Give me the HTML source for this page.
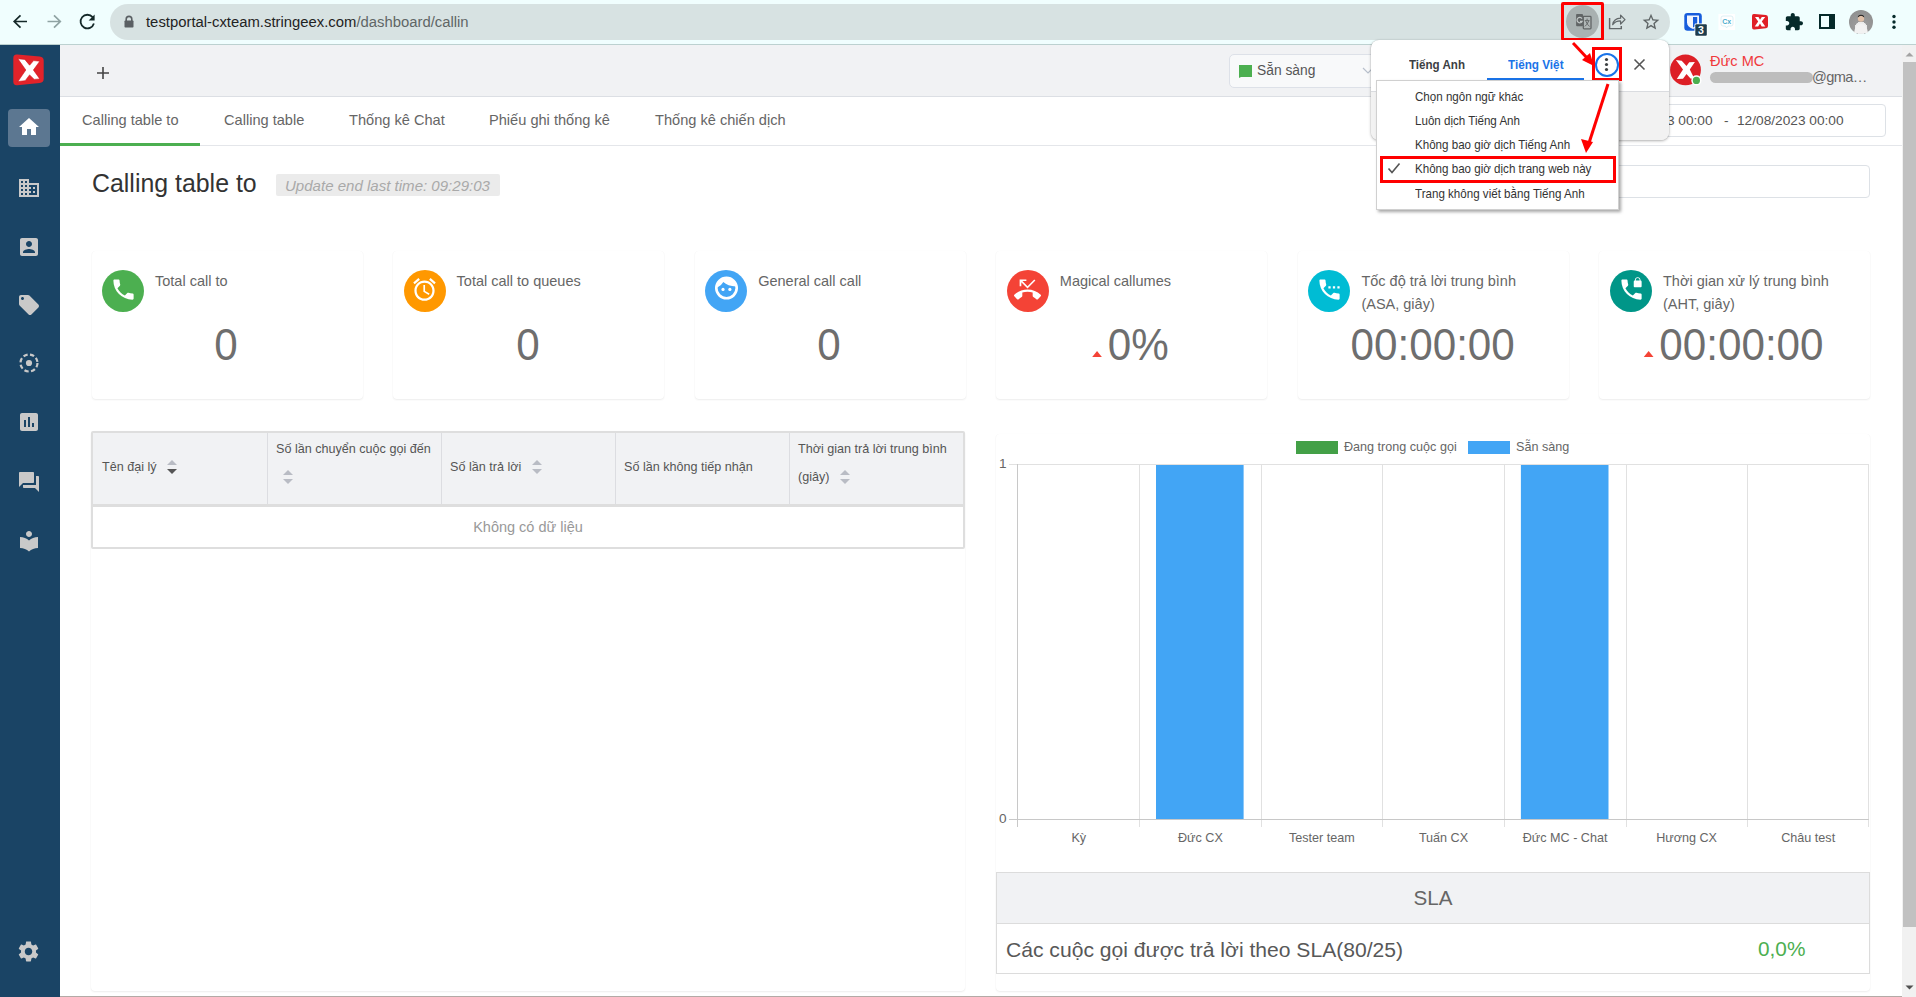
<!DOCTYPE html>
<html><head><meta charset="utf-8">
<style>
*{margin:0;padding:0;box-sizing:border-box}
html,body{width:1916px;height:997px;overflow:hidden;background:#fff;font-family:"Liberation Sans",sans-serif;position:relative}
.a{position:absolute}
.t{position:absolute;white-space:nowrap;line-height:1}
</style></head><body>

<!-- ===== BROWSER BAR ===== -->
<div class="a" style="left:0;top:0;width:1916px;height:44px;background:#f0fefe"></div>
<div class="a" style="left:0;top:44px;width:1916px;height:1px;background:#bcd1d0"></div>
<!-- back -->
<svg class="a" style="left:0;top:0" width="110" height="44">
<path d="M27 21.5 H14.5 M20.5 15.3 L14.2 21.5 L20.5 27.7" fill="none" stroke="#142828" stroke-width="1.7"/>
<path d="M47.5 21.5 H60 M54 15.3 L60.3 21.5 L54 27.7" fill="none" stroke="#8fa3a3" stroke-width="1.7"/>
<path d="M92.6 17.2 A6.8 6.8 0 1 0 93.9 23.5" fill="none" stroke="#142828" stroke-width="1.8"/>
<path d="M94.6 14.6 V20.6 H88.6 Z" fill="#142828"/>
</svg>
<div class="a" style="left:110px;top:4px;width:1560px;height:36px;border-radius:18px;background:#d7e2e2"></div>
<!-- lock -->
<svg class="a" style="left:123px;top:15px" width="12" height="13" viewBox="0 0 12 13"><path d="M3.2 6V4.2a2.8 2.8 0 0 1 5.6 0V6" fill="none" stroke="#5a5f63" stroke-width="1.6"/><rect x="1.5" y="5.5" width="9" height="7" rx="0.8" fill="#5a5f63"/></svg>
<div class="t" style="left:146px;top:15px;font-size:14.85px;color:#1f2323">testportal-cxteam.stringeex.com<span style="color:#5f6666">/dashboard/callin</span></div>


<!-- toolbar right -->
<div class="a" style="left:1566px;top:5px;width:33px;height:33px;border-radius:50%;background:#a9b1b1"></div>
<svg class="a" style="left:1566px;top:6px" width="34" height="32" viewBox="1566 6 34 32"><path d="M1583.3 16.4 H1590.2 Q1591 16.4 1591 17.2 V28 Q1591 28.8 1590.2 28.8 H1584.1 Q1583.3 28.8 1583.3 28 Z" fill="#b0b7b7" stroke="#616566" stroke-width="1.3"/><rect x="1576.1" y="13.9" width="6.9" height="12.3" rx="0.9" fill="#616566"/><path d="M1582 18.6 A2.7 2.7 0 1 0 1582.2 21.3 H1580" fill="none" stroke="#c2c8c8" stroke-width="1.2"/><path d="M1587.1 18.6 V20 M1584.8 20.6 H1589.5 M1588.6 21 Q1587.5 24.5 1584.9 26.4 M1585.9 21.2 Q1587 24.6 1589.6 26.4" fill="none" stroke="#616566" stroke-width="0.95"/></svg>
<div class="a" style="left:1561px;top:2px;width:43px;height:39px;border:3px solid #ff0000;border-radius:2px"></div>
<svg class="a" style="left:1604px;top:8px" width="30" height="28" viewBox="1604 8 30 28"><path d="M1609.6 18 V28.6 H1621.3 V26" fill="none" stroke="#62686a" stroke-width="1.45"/><path d="M1612.7 24.7 Q1613.6 18.6 1620.6 18.2 V15.1 L1625 19.6 L1620.6 24 V21 Q1615.6 20.9 1612.7 24.7 Z" fill="none" stroke="#62686a" stroke-width="1.25" stroke-linejoin="round"/></svg>
<svg class="a" style="left:1640.5px;top:11.6px" width="20" height="20" viewBox="0 0 24 24"><path d="M22 9.24l-7.19-.62L12 2 9.19 8.63 2 9.24l5.46 4.73L5.82 21 12 17.27 18.18 21l-1.63-7.03L22 9.24zM12 15.4l-3.76 2.27 1-4.28-3.32-2.88 4.38-.38L12 6.1l1.71 4.04 4.38.38-3.32 2.88 1 4.28L12 15.4z" fill="#5f6566"/></svg>
<!-- bitwarden -->
<svg class="a" style="left:1683px;top:12px" width="26" height="26" viewBox="0 0 26 26"><rect x="1.3" y="1" width="17.5" height="17.8" rx="3.2" fill="#175ddc"/><path d="M4 3.6 H16 V10.5 Q16 14.5 10 17 Q4 14.5 4 10.5 Z" fill="#f3f6fd"/><path d="M10 5 H14.2 V10.5 Q14.2 13.5 10 15.6 Z" fill="#175ddc"/><rect x="11.5" y="11.5" width="13" height="13" rx="1.2" fill="#fff"/><rect x="12.3" y="12.3" width="11.5" height="11.5" rx="1" fill="#1e3d4d"/><text x="15" y="22.3" font-family="Liberation Sans" font-weight="bold" font-size="10.5" fill="#fff">3</text></svg>
<svg class="a" style="left:1718px;top:13px" width="18" height="18" viewBox="0 0 18 18"><rect x="0.5" y="1" width="16.5" height="16" fill="#fff"/><path d="M3 5 Q3 3 5 3 H13 Q15 3 15 5 V11 Q15 13 13 13 H10 L8.5 15 L7.5 13 H5 Q3 13 3 11Z" fill="none" stroke="#d4ecf3" stroke-width="0.8"/><text x="4.2" y="10.6" font-family="Liberation Sans" font-weight="bold" font-size="7" fill="#4aaccc">Cx</text></svg>
<svg class="a" style="left:1751px;top:13px" width="18" height="17" viewBox="0 0 18 17"><path d="M1 3 Q1 0.5 3.5 1 L15 2 Q17 2.3 17 4.5 L17 13 Q17 15 15 15.3 L3.5 16.5 Q1 17 1 14 Z" fill="#e01f26"/><path d="M4 4 L7.5 4 L9 6.8 L10.8 4 L14.2 4 L10.8 8.5 L14.3 13.5 L10.7 13.5 L9 10.6 L7.2 13.5 L3.7 13.5 L7.2 8.5 Z" fill="#fff"/></svg>
<svg class="a" style="left:1784.5px;top:12.5px" width="18" height="18" viewBox="1 1 22 22"><path d="M20.5 11H19V7c0-1.1-.9-2-2-2h-4V3.5C13 2.12 11.88 1 10.5 1S8 2.12 8 3.5V5H4c-1.1 0-1.99.9-1.99 2v3.8H3.5c1.49 0 2.7 1.21 2.7 2.7s-1.21 2.7-2.7 2.7H2V20c0 1.1.9 2 2 2h3.8v-1.5c0-1.49 1.21-2.7 2.7-2.7 1.49 0 2.7 1.21 2.7 2.7V22H17c1.1 0 2-.9 2-2v-4h1.5c1.38 0 2.5-1.12 2.5-2.5S21.88 11 20.5 11z" fill="#062a2a" transform="rotate(0)"/></svg>
<svg class="a" style="left:1819px;top:14px" width="16" height="15" viewBox="0 0 16 15"><rect x="1" y="1" width="14" height="13" fill="none" stroke="#062a2a" stroke-width="2"/><rect x="10" y="1" width="5" height="13" fill="#062a2a"/></svg>
<div class="a" style="left:1849px;top:10px;width:24px;height:24px;border-radius:50%;background:radial-gradient(circle at 50% 75%,#f4f4f4 0,#eaeaea 28%,#9a9a9a 30%,#8c8c8c 100%)"></div>
<svg class="a" style="left:1854px;top:13px" width="14" height="20" viewBox="0 0 14 20"><circle cx="7" cy="5.5" r="3.2" fill="#e0c0a8"/><path d="M3.8 4.5 Q7 1 10.2 4.5 L10 3 Q7 0.5 4 3Z" fill="#222"/><path d="M0 20 Q1 11 7 11 Q13 11 14 20Z" fill="#f2f2f2"/></svg>
<svg class="a" style="left:1889px;top:12px" width="10" height="20" viewBox="0 0 10 20"><circle cx="5" cy="4.5" r="1.7" fill="#062a2a"/><circle cx="5" cy="10" r="1.7" fill="#062a2a"/><circle cx="5" cy="15.3" r="1.7" fill="#062a2a"/></svg>
<!-- ===== SIDEBAR ===== -->
<div class="a" style="left:0;top:45px;width:60px;height:952px;background:#1a4465"></div>

<!-- logo -->
<svg class="a" style="left:8px;top:48px" width="42" height="44" viewBox="8 48 42 44"><path d="M17.3 54.5 L39.7 56.5 Q43.7 56.9 43.7 60.8 L43.7 78.8 Q43.7 82.6 39.7 83.1 L17.3 85.2 Q13.3 85.6 13.3 81.5 L13.3 58.2 Q13.3 54.1 17.3 54.5 Z" fill="#e2232a"/><path d="M17.9 58.8 L24.8 59.4 L29.6 65.2 L33.6 60.6 L39.8 61.2 L33.4 70 L39.8 78.9 L34.2 79.4 L29.6 74.9 L25.2 80.7 L17.9 81.5 L25.8 70 Z" fill="#fff" stroke="#d01018" stroke-width="0.6"/></svg>
<div class="a" style="left:8px;top:109px;width:42px;height:38px;border-radius:4px;background:#5c7791"></div>
<svg class="a" style="left:16.6px;top:115.4px" width="24" height="24" viewBox="0 0 24 24"><path d="M10 20v-6h4v6h5v-8h3L12 3 2 12h3v8z" fill="#fff"/></svg>
<svg class="a" style="left:16.6px;top:175.7px" width="24" height="24" viewBox="0 0 24 24"><path d="M12 7V3H2v18h20V7H12zM6 19H4v-2h2v2zm0-4H4v-2h2v2zm0-4H4V9h2v2zm0-4H4V5h2v2zm4 12H8v-2h2v2zm0-4H8v-2h2v2zm0-4H8V9h2v2zm0-4H8V5h2v2zm10 12h-8v-2h2v-2h-2v-2h2v-2h-2V9h8v10zm-2-8h-2v2h2v-2zm0 4h-2v2h2v-2z" fill="#c9c9c9"/></svg>
<svg class="a" style="left:16.6px;top:234.5px" width="24" height="24" viewBox="0 0 24 24"><path d="M3 5v14c0 1.1.89 2 2 2h14c1.1 0 2-.9 2-2V5c0-1.1-.9-2-2-2H5c-1.11 0-2 .9-2 2zm12 4c0 1.66-1.34 3-3 3s-3-1.34-3-3 1.34-3 3-3 3 1.34 3 3zm-9 8c0-2 4-3.1 6-3.1s6 1.1 6 3.1v1H6v-1z" fill="#c9c9c9"/></svg>
<svg class="a" style="left:16.6px;top:293.3px" width="24" height="24" viewBox="0 0 24 24"><path d="M21.41 11.58l-9-9C12.05 2.22 11.55 2 11 2H4c-1.1 0-2 .9-2 2v7c0 .55.22 1.05.59 1.42l9 9c.36.36.86.58 1.41.58.55 0 1.05-.22 1.41-.59l7-7c.37-.36.59-.86.59-1.41 0-.55-.23-1.06-.59-1.42zM5.5 7C4.67 7 4 6.33 4 5.5S4.67 4 5.5 4 7 4.67 7 5.5 6.33 7 5.5 7z" fill="#c9c9c9"/></svg>
<svg class="a" style="left:16.6px;top:351.2px" width="24" height="24" viewBox="0 0 24 24"><circle cx="12" cy="12" r="8.5" fill="none" stroke="#c9c9c9" stroke-width="2.2" stroke-dasharray="4.4 2.4"/><circle cx="12" cy="12" r="3.1" fill="#c9c9c9"/></svg>
<svg class="a" style="left:16.6px;top:410.0px" width="24" height="24" viewBox="0 0 24 24"><path d="M19 3H5c-1.1 0-2 .9-2 2v14c0 1.1.9 2 2 2h14c1.1 0 2-.9 2-2V5c0-1.1-.9-2-2-2zM9 17H7v-7h2v7zm4 0h-2V7h2v10zm4 0h-2v-4h2v4z" fill="#c9c9c9"/></svg>
<svg class="a" style="left:16.6px;top:470.2px" width="24" height="24" viewBox="0 0 24 24"><path d="M21 6h-2v9H6v2c0 .55.45 1 1 1h11l4 4V7c0-.55-.45-1-1-1zm-4 6V3c0-.55-.45-1-1-1H3c-.55 0-1 .45-1 1v14l4-4h10c.55 0 1-.45 1-1z" fill="#c9c9c9"/></svg>
<svg class="a" style="left:16.6px;top:528.6px" width="24" height="24" viewBox="0 0 24 24"><path d="M12 11.55C9.64 9.35 6.48 8 3 8v11c3.48 0 6.64 1.35 9 3.55 2.36-2.19 5.52-3.55 9-3.55V8c-3.48 0-6.64 1.35-9 3.55zM12 8c1.66 0 3-1.34 3-3s-1.34-3-3-3-3 1.34-3 3 1.34 3 3 3z" fill="#c9c9c9"/></svg>
<svg class="a" style="left:16px;top:939px" width="25" height="25" viewBox="0 0 24 24"><path d="M19.14 12.94c.04-.3.06-.61.06-.94 0-.32-.02-.64-.07-.94l2.03-1.58c.18-.14.23-.41.12-.61l-1.92-3.32c-.12-.22-.37-.29-.59-.22l-2.39.96c-.5-.38-1.03-.7-1.620-.94l-.36-2.54c-.04-.24-.24-.41-.48-.41h-3.84c-.24 0-.43.17-.47.41l-.36 2.54c-.59.24-1.13.57-1.62.94l-2.39-.96c-.22-.08-.47 0-.59.22L2.740 8.87c-.12.21-.08.47.12.61l2.03 1.58c-.05.3-.09.63-.09.94s.02.64.07.94l-2.03 1.58c-.18.14-.23.41-.12.61l1.92 3.32c.12.22.37.29.59.22l2.39-.96c.5.38 1.03.7 1.62.94l.36 2.54c.05.24.24.41.48.41h3.84c.24 0 .44-.17.47-.41l.36-2.54c.59-.24 1.13-.56 1.62-.94l2.39.96c.22.08.47 0 .59-.22l1.92-3.32c.12-.22.07-.47-.12-.61l-2.010-1.58zM12 15.6c-1.98 0-3.6-1.62-3.6-3.6s1.62-3.6 3.6-3.6 3.6 1.62 3.6 3.6-1.62 3.6-3.6 3.6z" fill="#c9c9c9"/></svg>

<!-- ===== HEADER ===== -->
<div class="a" style="left:60px;top:45px;width:1842px;height:51px;background:#f1f2f4"></div>
<div class="a" style="left:60px;top:96px;width:1842px;height:1px;background:#dcdfe4"></div>
<svg class="a" style="left:96px;top:66px" width="14" height="14" viewBox="0 0 14 14"><path d="M7 1 V13 M1 7 H13" stroke="#444" stroke-width="1.6"/></svg>


<!-- status dropdown -->
<div class="a" style="left:1229px;top:54px;width:160px;height:34px;border:1px solid #dde1e8;border-radius:5px;background:#f8f9fa"></div>
<svg class="a" style="left:1239px;top:65px" width="14" height="13" viewBox="0 0 14 13"><path d="M0 0H13V12H2L0 13Z" fill="#4caf50"/></svg>
<div class="t" style="left:1257px;top:64px;font-size:13.8px;color:#555">Sẵn sàng</div>
<svg class="a" style="left:1362px;top:67px" width="12" height="8" viewBox="0 0 12 8"><path d="M1 1 L6 6 L11 1" fill="none" stroke="#b8c0cc" stroke-width="1.2"/></svg>
<!-- avatar -->
<svg class="a" style="left:1664px;top:48px" width="46" height="44" viewBox="1664 48 46 44"><circle cx="1685.5" cy="69.9" r="15.4" fill="#dd1f26"/><path d="M1675.9 60.1 L1681.7 60.8 L1686.5 65.9 L1689.2 62.3 L1694.9 62.1 L1689.8 69.6 L1694.5 78.9 L1690.5 78.5 L1686.5 74 L1683 78.7 L1676.8 78.9 L1683 69.6 Z" fill="#fff"/><circle cx="1696.4" cy="80.4" r="5.1" fill="#fff"/><circle cx="1696.4" cy="80.4" r="3.6" fill="#4caf50"/></svg>
<div class="t" style="left:1710px;top:54px;font-size:14.6px;color:#f0393c">Đức MC</div>
<div class="a" style="left:1710px;top:72px;width:103px;height:11px;border-radius:6px;background:#bdbdbd"></div>
<div class="t" style="left:1812px;top:70px;font-size:14.6px;color:#666;letter-spacing:-0.6px">@gma…</div>
<!-- ===== TABS ===== -->
<div class="a" style="left:60px;top:145px;width:1842px;height:1px;background:#e4e6ea"></div>
<div class="a" style="left:60px;top:143px;width:140px;height:3px;background:#4caf50"></div>

<div class="t" style="left:82px;top:113px;font-size:14.6px;color:#666">Calling table to</div>
<div class="t" style="left:224px;top:113px;font-size:14.6px;color:#666">Calling table</div>
<div class="t" style="left:349px;top:113px;font-size:14.6px;color:#666">Thống kê Chat</div>
<div class="t" style="left:489px;top:113px;font-size:14.6px;color:#666">Phiếu ghi thống kê</div>
<div class="t" style="left:655px;top:113px;font-size:14.6px;color:#666">Thống kê chiến dịch</div>
<!-- date input -->
<div class="a" style="left:1500px;top:104px;width:386px;height:33px;border:1px solid #dde1e6;border-radius:4px;background:#fff"></div>
<div class="t" style="left:1606px;top:114px;font-size:13.7px;color:#555">12/07/2023 00:00</div><div class="t" style="left:1724px;top:114px;font-size:13.7px;color:#555">-</div><div class="t" style="left:1737px;top:114px;font-size:13.7px;color:#555">12/08/2023 00:00</div>
<!-- title -->
<div class="t" style="left:92px;top:171px;font-size:24.9px;color:#333">Calling table to</div>
<div class="a" style="left:276px;top:174px;width:224px;height:22px;border-radius:2px;background:#ebebeb"></div>
<div class="t" style="left:285px;top:178px;font-size:15.05px;color:#a9a9a9;font-style:italic">Update end last time: 09:29:03</div>
<!-- search input -->
<div class="a" style="left:1500px;top:165px;width:370px;height:33px;border:1px solid #dde1e6;border-radius:4px;background:#fff"></div>

<div class="a" style="left:91.5px;top:251px;width:271px;height:148px;border-radius:4px;background:#fff;box-shadow:0 1px 2px rgba(0,0,0,0.07),0 0 1px rgba(0,0,0,0.05)"></div>
<div class="a" style="left:102.0px;top:270px;width:42px;height:42px;border-radius:50%;background:#4caf50"></div>
<svg class="a" style="left:109.5px;top:276px" width="27" height="27" viewBox="0 0 24 24"><path d="M6.62 10.79c1.44 2.83 3.76 5.14 6.59 6.59l2.2-2.2c.27-.27.67-.36 1.02-.24 1.12.37 2.33.57 3.570.57.55 0 1 .45 1 1V20c0 .55-.45 1-1 1-9.39 0-17-7.61-17-17 0-.55.45-1 1-1h3.5c.55 0 1 .45 1 1 0 1.25.2 2.45.57 3.57.11.35.03.74-.25 1.02l-2.2 2.2z" fill="#fff"/></svg>
<div class="t" style="left:155.0px;top:274px;font-size:14.5px;color:#666">Total call to</div>
<div class="t" style="left:76.2px;width:300px;text-align:center;top:324px;font-size:43.5px;color:#6e6e6e"><span style="display:inline-block;transform:scaleX(0.97);white-space:nowrap">0</span></div>
<div class="a" style="left:393.0px;top:251px;width:271px;height:148px;border-radius:4px;background:#fff;box-shadow:0 1px 2px rgba(0,0,0,0.07),0 0 1px rgba(0,0,0,0.05)"></div>
<div class="a" style="left:403.6px;top:270px;width:42px;height:42px;border-radius:50%;background:#ff9800"></div>
<svg class="a" style="left:411.1px;top:276px" width="27" height="27" viewBox="0 0 24 24"><path d="M22 5.72l-4.6-3.86-1.29 1.53 4.6 3.86L22 5.72zM7.880 3.39L6.6 1.86 2 5.71l1.29 1.53 4.59-3.85zM12.5 8H11v6l4.75 2.85.75-1.23-4-2.37V8zM12 4c-4.97 0-9 4.03-9 9s4.02 9 9 9c4.97 0 9-4.03 9-9s-4.03-9-9-9zm0 16c-3.87 0-7-3.13-7-7s3.13-7 7-7 7 3.13 7 7-3.13 7-7 7z" fill="#fff"/></svg>
<div class="t" style="left:456.6px;top:274px;font-size:14.5px;color:#666">Total call to queues</div>
<div class="t" style="left:377.8px;width:300px;text-align:center;top:324px;font-size:43.5px;color:#6e6e6e"><span style="display:inline-block;transform:scaleX(0.97);white-space:nowrap">0</span></div>
<div class="a" style="left:694.5px;top:251px;width:271px;height:148px;border-radius:4px;background:#fff;box-shadow:0 1px 2px rgba(0,0,0,0.07),0 0 1px rgba(0,0,0,0.05)"></div>
<div class="a" style="left:705.2px;top:270px;width:42px;height:42px;border-radius:50%;background:#42a5f5"></div>
<svg class="a" style="left:712.7px;top:276px" width="27" height="27" viewBox="0 0 24 24"><g transform="translate(0,-1.25)"><defs><clipPath id="fc"><circle cx="12" cy="12" r="9.2"/></clipPath></defs><circle cx="12" cy="12" r="9.07" fill="none" stroke="#fff" stroke-width="2.35"/><path clip-path="url(#fc)" d="M3.5 11.8 Q7.5 9.8 9.2 6.6 Q13 10.2 20.5 10.6 L21 2 L3 2 Z" fill="#fff"/><circle cx="8.9" cy="13.2" r="1.42" fill="#fff"/><circle cx="15" cy="13.2" r="1.42" fill="#fff"/></g></svg>
<div class="t" style="left:758.2px;top:274px;font-size:14.5px;color:#666">General call call</div>
<div class="t" style="left:679.4px;width:300px;text-align:center;top:324px;font-size:43.5px;color:#6e6e6e"><span style="display:inline-block;transform:scaleX(0.97);white-space:nowrap">0</span></div>
<div class="a" style="left:996.0px;top:251px;width:271px;height:148px;border-radius:4px;background:#fff;box-shadow:0 1px 2px rgba(0,0,0,0.07),0 0 1px rgba(0,0,0,0.05)"></div>
<div class="a" style="left:1006.8px;top:270px;width:42px;height:42px;border-radius:50%;background:#f44336"></div>
<svg class="a" style="left:1014.3px;top:276px" width="27" height="27" viewBox="0 0 24 24"><path d="M6.5 5.5L12 11l7-7-1-1-6 6-4.5-4.5H11V3H5v6h1.5V5.5zm17.21 11.17C20.66 13.78 16.54 12 12 12 7.46 12 3.34 13.780.29 16.67c-.18.18-.29.43-.29.71s.11.53.29.71l2.48 2.48c.18.18.43.29.71.29.27 0 .52-.11.7-.28.79-.74 1.69-1.36 2.66-1.85.33-.16.56-.5.56-.9v-3.1c1.45-.48 3-.73 4.6-.73 1.6 0 3.15.25 4.6.72v3.1c0 .39.23.74.56.9.98.49 1.87 1.12 2.67 1.85.18.18.43.28.7.28.28 0 .53-.11.71-.29l2.48-2.48c.18-.18.29-.43.29-.71s-.12-.52-.3-.7z" fill="#fff"/></svg>
<div class="t" style="left:1059.8px;top:274px;font-size:14.5px;color:#666">Magical callumes</div>
<div class="t" style="left:980.1px;width:300px;text-align:center;top:324px;font-size:43.5px;color:#6e6e6e"><span style="display:inline-block;transform:scaleX(0.97);white-space:nowrap"><span style="display:inline-block;width:0;height:0;border-left:5px solid transparent;border-right:5px solid transparent;border-bottom:6px solid #f44336;margin-right:6px;vertical-align:3px"></span>0%</span></div>
<div class="a" style="left:1297.5px;top:251px;width:271px;height:148px;border-radius:4px;background:#fff;box-shadow:0 1px 2px rgba(0,0,0,0.07),0 0 1px rgba(0,0,0,0.05)"></div>
<div class="a" style="left:1308.4px;top:270px;width:42px;height:42px;border-radius:50%;background:#00bcd4"></div>
<svg class="a" style="left:1315.9px;top:276px" width="27" height="27" viewBox="0 0 24 24"><path d="M13 9h-2v2h2V9zm4 0h-2v2h2V9zm3 6.5c-1.25 0-2.45-.2-3.57-.57-.35-.11-.74-.03-1.02.24l-2.2 2.2c-2.83-1.44-5.15-3.75-6.59-6.58l2.2-2.21c.28-.27.36-.66.25-1.01C8.7 6.45 8.5 5.25 8.5 4c0-.55-.45-1-1-1H4c-.55 0-1 .45-1 1 0 9.39 7.61 17 17 17 .55 0 1-.45 1-1v-3.5c0-.55-.45-1-1-1zM19 9v2h2V9h-2z" fill="#fff"/></svg>
<div class="t" style="left:1361.4px;top:274px;font-size:14.5px;color:#666">Tốc độ trả lời trung bình</div>
<div class="t" style="left:1361.4px;top:297px;font-size:14.5px;color:#666">(ASA, giây)</div>
<div class="t" style="left:1282.6px;width:300px;text-align:center;top:324px;font-size:43.5px;color:#6e6e6e"><span style="display:inline-block;transform:scaleX(0.97);white-space:nowrap">00:00:00</span></div>
<div class="a" style="left:1599.0px;top:251px;width:271px;height:148px;border-radius:4px;background:#fff;box-shadow:0 1px 2px rgba(0,0,0,0.07),0 0 1px rgba(0,0,0,0.05)"></div>
<div class="a" style="left:1610.0px;top:270px;width:42px;height:42px;border-radius:50%;background:#009688"></div>
<svg class="a" style="left:1617.5px;top:276px" width="27" height="27" viewBox="0 0 24 24"><path d="M20 15.5c-1.25 0-2.45-.2-3.57-.57-.35-.11-.74-.03-1.02.24l-2.2 2.2c-2.83-1.44-5.15-3.75-6.59-6.59l2.2-2.21c.28-.26.36-.65.25-1C8.7 6.45 8.5 5.25 8.5 4c0-.55-.45-1-1-1H4c-.55 0-1 .45-1 1 0 9.39 7.61 17 17 17 .55 0 1-.45 1-1v-3.5c0-.55-.45-1-1-1zM20 4v-.5C20 2.12 18.88 1 17.5 1S15 2.120 15 3.5V4c-.55 0-1 .45-1 1v4c0 .55.45 1 1 1h5c.55 0 1-.45 1-1V5c0-.55-.45-1-1-1zm-.8 0h-3.4v-.5c0-.94.76-1.7 1.7-1.7s1.7.76 1.7 1.7V4z" fill="#fff"/></svg>
<div class="t" style="left:1663.0px;top:274px;font-size:14.5px;color:#666">Thời gian xử lý trung bình</div>
<div class="t" style="left:1663.0px;top:297px;font-size:14.5px;color:#666">(AHT, giây)</div>
<div class="t" style="left:1583.8px;width:300px;text-align:center;top:324px;font-size:43.5px;color:#6e6e6e"><span style="display:inline-block;transform:scaleX(0.97);white-space:nowrap"><span style="display:inline-block;width:0;height:0;border-left:5px solid transparent;border-right:5px solid transparent;border-bottom:6px solid #f44336;margin-right:6px;vertical-align:3px"></span>00:00:00</span></div>
<!-- left card -->
<div class="a" style="left:91px;top:431px;width:874px;height:560px;border-radius:4px;background:#fff;box-shadow:0 1px 2px rgba(0,0,0,0.07),0 0 1px rgba(0,0,0,0.05)"></div>
<div class="a" style="left:91px;top:431px;width:874px;height:118px;border:2px solid #dedede;border-radius:2px;background:#fff"></div>
<div class="a" style="left:93px;top:433px;width:870px;height:71px;background:#f1f2f4"></div>
<div class="a" style="left:93px;top:504px;width:870px;height:3px;background:#dedede"></div>
<div class="a" style="left:267px;top:433px;width:1px;height:71px;background:#dcdde1"></div>
<div class="a" style="left:441px;top:433px;width:1px;height:71px;background:#dcdde1"></div>
<div class="a" style="left:615px;top:433px;width:1px;height:71px;background:#dcdde1"></div>
<div class="a" style="left:789px;top:433px;width:1px;height:71px;background:#dcdde1"></div>
<div class="t" style="left:102px;top:461px;font-size:12.6px;color:#555">Tên đại lý</div>
<div class="t" style="left:276px;top:443px;font-size:12.6px;color:#555">Số lần chuyển cuộc gọi đến</div>
<div class="t" style="left:450px;top:461px;font-size:12.6px;color:#555">Số lần trả lời</div>
<div class="t" style="left:624px;top:461px;font-size:12.6px;color:#555">Số lần không tiếp nhận</div>
<div class="t" style="left:798px;top:443px;font-size:12.6px;color:#555">Thời gian trả lời trung bình</div>
<div class="t" style="left:798px;top:471px;font-size:12.6px;color:#555">(giây)</div>
<svg class="a" style="left:167px;top:460px" width="10" height="15" viewBox="0 0 10 15"><path d="M0 5 L5 0 L10 5Z" fill="#b9bcc4"/><path d="M0 9 L5 14 L10 9Z" fill="#555"/></svg>
<svg class="a" style="left:283px;top:470px" width="10" height="15" viewBox="0 0 10 15"><path d="M0 5 L5 0 L10 5Z" fill="#b9bcc4"/><path d="M0 9 L5 14 L10 9Z" fill="#b9bcc4"/></svg>
<svg class="a" style="left:532px;top:460px" width="10" height="15" viewBox="0 0 10 15"><path d="M0 5 L5 0 L10 5Z" fill="#b9bcc4"/><path d="M0 9 L5 14 L10 9Z" fill="#b9bcc4"/></svg>
<svg class="a" style="left:840px;top:470px" width="10" height="15" viewBox="0 0 10 15"><path d="M0 5 L5 0 L10 5Z" fill="#b9bcc4"/><path d="M0 9 L5 14 L10 9Z" fill="#b9bcc4"/></svg>
<div class="t" style="left:93px;width:870px;text-align:center;top:520px;font-size:14.5px;color:#999">Không có dữ liệu</div>
<div class="a" style="left:996px;top:434px;width:874px;height:557px;border-radius:4px;background:#fff;box-shadow:0 1px 2px rgba(0,0,0,0.07),0 0 1px rgba(0,0,0,0.05)"></div>
<div class="a" style="left:1296px;top:441px;width:42px;height:13px;background:#43a047"></div>
<div class="t" style="left:1344px;top:441px;font-size:12.6px;color:#666">Đang trong cuộc gọi</div>
<div class="a" style="left:1467.5px;top:441px;width:42px;height:13px;background:#42a5f5"></div>
<div class="t" style="left:1516px;top:441px;font-size:12.6px;color:#666">Sẵn sàng</div>
<svg class="a" style="left:0;top:0" width="1916" height="997">
<line x1="1009" y1="464.5" x2="1868.8" y2="464.5" stroke="#e1e1e1" stroke-width="1"/>
<line x1="1017.5" y1="464" x2="1017.5" y2="827" stroke="#c8c8c8" stroke-width="1"/>
<line x1="1139.5" y1="464" x2="1139.5" y2="827" stroke="#e1e1e1" stroke-width="1"/>
<line x1="1261.5" y1="464" x2="1261.5" y2="827" stroke="#e1e1e1" stroke-width="1"/>
<line x1="1382.5" y1="464" x2="1382.5" y2="827" stroke="#e1e1e1" stroke-width="1"/>
<line x1="1504.5" y1="464" x2="1504.5" y2="827" stroke="#e1e1e1" stroke-width="1"/>
<line x1="1626.5" y1="464" x2="1626.5" y2="827" stroke="#e1e1e1" stroke-width="1"/>
<line x1="1747.5" y1="464" x2="1747.5" y2="827" stroke="#e1e1e1" stroke-width="1"/>
<line x1="1868.5" y1="464" x2="1868.5" y2="827" stroke="#e1e1e1" stroke-width="1"/>
<line x1="1009" y1="819.5" x2="1868.8" y2="819.5" stroke="#c8c8c8" stroke-width="1"/>
<rect x="1156.0" y="465" width="87.6" height="354" fill="#42a5f5"/>
<rect x="1520.9" y="465" width="87.6" height="354" fill="#42a5f5"/>
</svg>
<div class="t" style="left:999px;top:457px;font-size:13.6px;color:#666">1</div>
<div class="t" style="left:999px;top:812px;font-size:13.6px;color:#666">0</div>
<div class="t" style="left:998.8px;width:160px;text-align:center;top:832px;font-size:12.6px;color:#666">Kỳ</div>
<div class="t" style="left:1120.4px;width:160px;text-align:center;top:832px;font-size:12.6px;color:#666">Đức CX</div>
<div class="t" style="left:1241.9px;width:160px;text-align:center;top:832px;font-size:12.6px;color:#666">Tester team</div>
<div class="t" style="left:1363.5px;width:160px;text-align:center;top:832px;font-size:12.6px;color:#666">Tuấn CX</div>
<div class="t" style="left:1485.1px;width:160px;text-align:center;top:832px;font-size:12.6px;color:#666">Đức MC - Chat</div>
<div class="t" style="left:1606.6px;width:160px;text-align:center;top:832px;font-size:12.6px;color:#666">Hương CX</div>
<div class="t" style="left:1728.2px;width:160px;text-align:center;top:832px;font-size:12.6px;color:#666">Châu test</div>

<div class="a" style="left:996px;top:872px;width:874px;height:102px;border:1px solid #dcdcdc;background:#fff"></div>
<div class="a" style="left:997px;top:873px;width:872px;height:51px;background:#f1f2f4;border-bottom:1px solid #dcdcdc"></div>
<div class="t" style="left:997px;width:872px;text-align:center;top:888px;font-size:20.6px;color:#666">SLA</div>
<div class="t" style="left:1006px;top:939px;font-size:21.1px;color:#585858">Các cuộc gọi được trả lời theo SLA(80/25)</div>
<div class="t" style="left:1758px;top:939px;font-size:20.8px;color:#4caf50">0,0%</div>
<div class="a" style="left:60px;top:996px;width:1856px;height:1px;background:#b3aaa6"></div>
<!-- ===== SCROLLBAR ===== -->
<div class="a" style="left:1902px;top:45px;width:14px;height:952px;background:#f1f1f1"></div>
<div class="a" style="left:1903px;top:62px;width:13px;height:865px;background:#c1c1c1"></div>
<svg class="a" style="left:1903px;top:50px" width="13" height="8" viewBox="0 0 13 8"><path d="M2.5 6.5 L6.5 2.5 L10.5 6.5Z" fill="#a3a3a3"/></svg>
<svg class="a" style="left:1903px;top:984px" width="13" height="8" viewBox="0 0 13 8"><path d="M2.5 1.5 L6.5 5.5 L10.5 1.5Z" fill="#505050"/></svg>


<!-- ===== TRANSLATE POPUP ===== -->
<div class="a" style="left:1371px;top:40px;width:298px;height:100px;border-radius:8px;background:#fff;box-shadow:0 1px 3px rgba(0,0,0,0.3),0 0 1px rgba(0,0,0,0.25);overflow:hidden">
  <div class="a" style="left:0;top:51px;width:298px;height:49px;background:#f2f2f2;border-top:1px solid #dadce0"></div>
</div>
<div class="t" style="left:1409px;top:59px;font-size:12.4px;font-weight:bold;color:#3c4043;transform:scaleX(0.935);transform-origin:0 0">Tiếng Anh</div>
<div class="t" style="left:1508px;top:59px;font-size:12.4px;font-weight:bold;color:#1a73e8;transform:scaleX(0.945);transform-origin:0 0">Tiếng Việt</div>
<div class="a" style="left:1487px;top:78px;width:97px;height:2px;background:#1a73e8"></div>
<div class="a" style="left:1594.5px;top:52.5px;width:24px;height:24px;border-radius:50%;border:2px solid #1a73e8"></div>
<svg class="a" style="left:1602px;top:55px" width="9" height="20" viewBox="0 0 9 20"><circle cx="4.5" cy="4.5" r="1.6" fill="#3c4043"/><circle cx="4.5" cy="9.5" r="1.6" fill="#3c4043"/><circle cx="4.5" cy="14.5" r="1.6" fill="#3c4043"/></svg>
<div class="a" style="left:1592px;top:47px;width:30px;height:34px;border:3px solid #ff0000"></div>
<svg class="a" style="left:1633px;top:58px" width="13" height="13" viewBox="0 0 13 13"><path d="M1.5 1.5 L11.5 11.5 M11.5 1.5 L1.5 11.5" stroke="#555" stroke-width="1.6"/></svg>
<!-- menu -->
<div class="a" style="left:1376px;top:80px;width:243px;height:130px;background:#fff;border:1px solid #d0d0d0;box-shadow:2px 2px 3px rgba(0,0,0,0.35)"></div>
<div class="t" style="left:1415px;top:91px;font-size:12.6px;color:#333;transform:scaleX(0.92);transform-origin:0 0">Chọn ngôn ngữ khác</div>
<div class="t" style="left:1415px;top:115px;font-size:12.6px;color:#333;transform:scaleX(0.92);transform-origin:0 0">Luôn dịch Tiếng Anh</div>
<div class="t" style="left:1415px;top:139px;font-size:12.6px;color:#333;transform:scaleX(0.92);transform-origin:0 0">Không bao giờ dịch Tiếng Anh</div>
<div class="t" style="left:1415px;top:163px;font-size:12.6px;color:#333;transform:scaleX(0.92);transform-origin:0 0">Không bao giờ dịch trang web này</div>
<div class="t" style="left:1415px;top:188px;font-size:12.6px;color:#333;transform:scaleX(0.92);transform-origin:0 0">Trang không viết bằng Tiếng Anh</div>
<svg class="a" style="left:1387px;top:162px" width="14" height="13" viewBox="0 0 14 13"><path d="M1.5 6.5 L5 10.5 L12.5 1.5" fill="none" stroke="#555" stroke-width="1.6"/></svg>
<div class="a" style="left:1380px;top:156px;width:236px;height:27px;border:3px solid #ff0000"></div>
<!-- arrows -->
<svg class="a" style="left:0;top:0" width="1916" height="997">
 <line x1="1573" y1="43" x2="1589" y2="60" stroke="#ff0000" stroke-width="3"/>
 <path d="M1594 66 L1582 60 L1590 53 Z" fill="#ff0000"/>
 <line x1="1608" y1="84" x2="1589" y2="143" stroke="#ff0000" stroke-width="3"/>
 <path d="M1586 153 L1581 139 L1593 142 Z" fill="#ff0000"/>
</svg>
</body></html>
